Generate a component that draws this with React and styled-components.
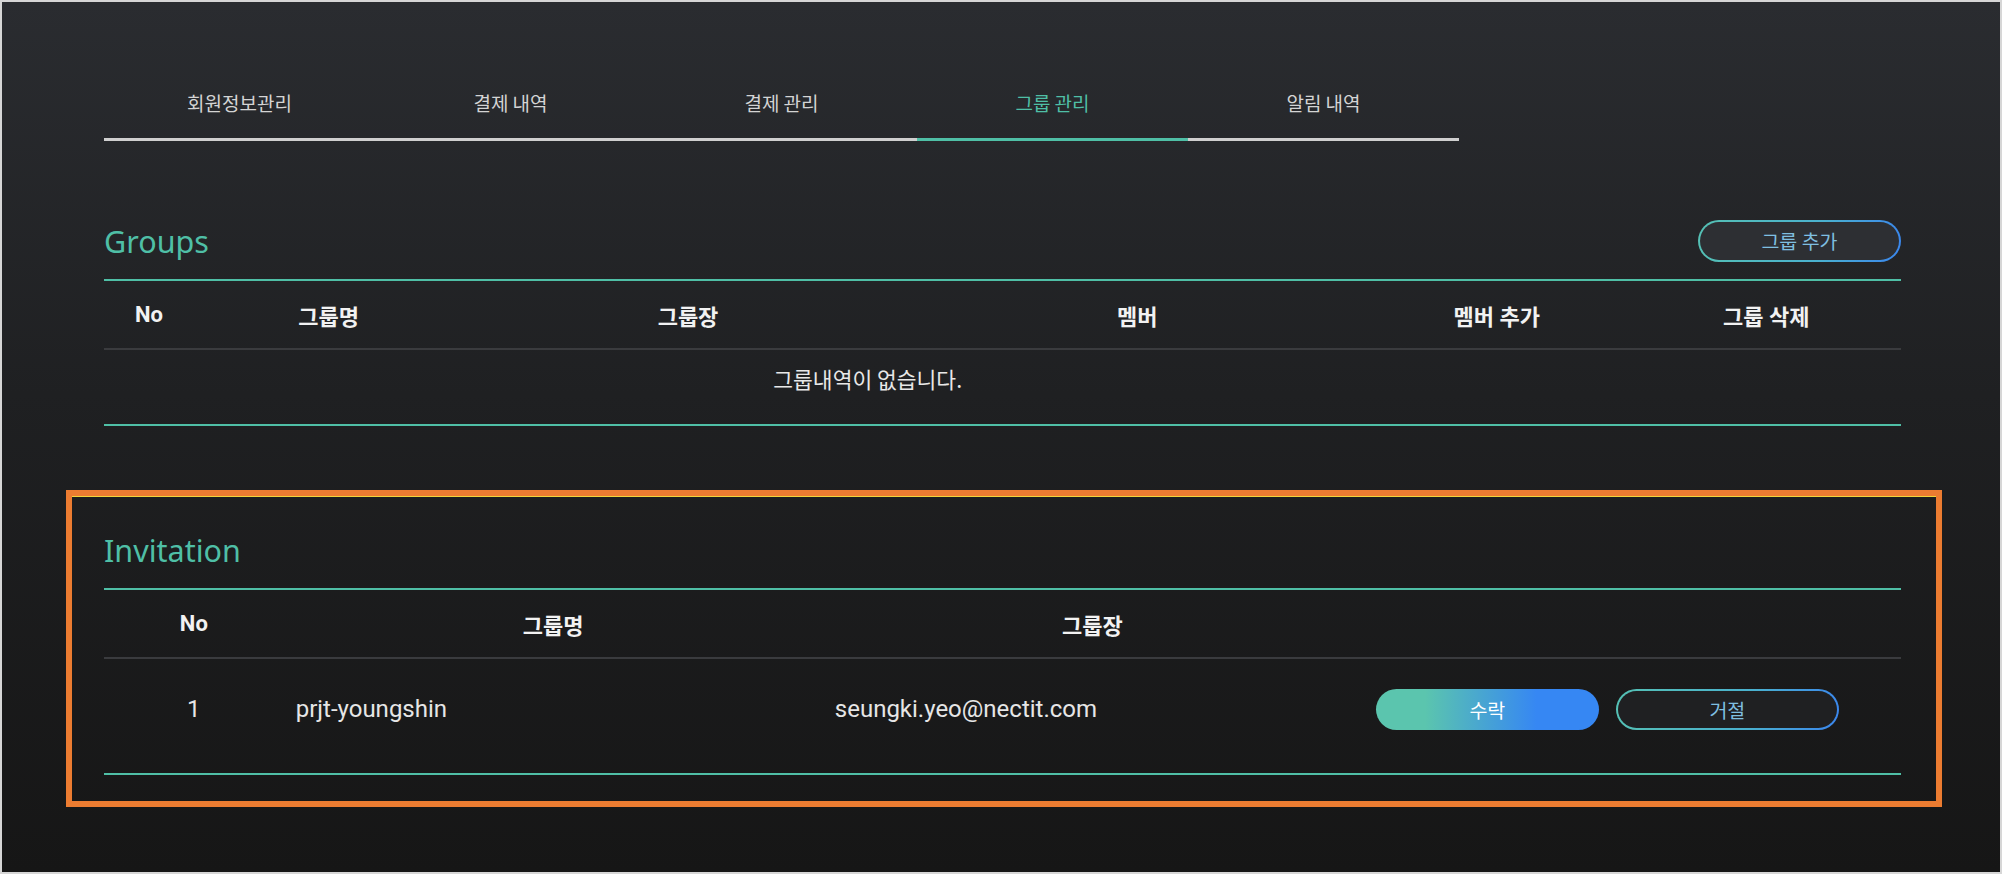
import { createGlobalStyle, styled } from 'styled-components';

const TEAL = '#4fbfa6';

const tabs = ['회원정보관리', '결제 내역', '결제 관리', '그룹 관리', '알림 내역'];
const activeTab = 3;

const groupColumns = [
  { label: 'No', width: '5%' },
  { label: '그룹명', width: '15%' },
  { label: '그룹장', width: '25%' },
  { label: '멤버', width: '25%' },
  { label: '멤버 추가', width: '15%' },
  { label: '그룹 삭제', width: '15%' },
];

const inviteColumns = [
  { label: 'No', width: '10%' },
  { label: '그룹명', width: '30%' },
  { label: '그룹장', width: '30%' },
  { label: '', width: '30%' },
];

const invitations = [
  { no: 1, name: 'prjt-youngshin', owner: 'seungki.yeo@nectit.com' },
];

const GlobalStyle = createGlobalStyle`
  * { box-sizing: border-box; }
  body {
    margin: 0;
    background: #161616;
    font-family: Roboto, "Noto Sans CJK KR", sans-serif;
  }
`;

function Groups() {
  return (
    <Section>
      <SectionHead>
        <Title>Groups</Title>
        <OutlineButton wide>그룹 추가</OutlineButton>
      </SectionHead>
      <Table>
        <colgroup>
          {groupColumns.map((c, i) => <col key={i} style={{ width: c.width }} />)}
        </colgroup>
        <thead>
          <tr>
            {groupColumns.map((c, i) => <Th key={i}>{c.label}</Th>)}
          </tr>
        </thead>
        <tbody>
          <tr>
            <EmptyCell colSpan={5}>그룹내역이 없습니다.</EmptyCell>
            <EmptyCell />
          </tr>
        </tbody>
      </Table>
    </Section>
  );
}

function Invitation() {
  return (
    <Highlighted>
      <SectionHead>
        <Title>Invitation</Title>
      </SectionHead>
      <Table>
        <colgroup>
          {inviteColumns.map((c, i) => <col key={i} style={{ width: c.width }} />)}
        </colgroup>
        <thead>
          <tr>
            {inviteColumns.map((c, i) => <Th key={i}>{c.label}</Th>)}
          </tr>
        </thead>
        <tbody>
          {invitations.map((inv) => (
            <tr key={inv.no}>
              <Td center>{inv.no}</Td>
              <Td>{inv.name}</Td>
              <Td>{inv.owner}</Td>
              <Td>
                <Actions>
                  <AcceptButton>수락</AcceptButton>
                  <OutlineButton>거절</OutlineButton>
                </Actions>
              </Td>
            </tr>
          ))}
        </tbody>
      </Table>
    </Highlighted>
  );
}

export default function App() {
  return (
    <>
      <GlobalStyle />
      <Page>
        <TabBar>
          {tabs.map((t, i) => (
            <Tab key={t} active={i === activeTab}>{t}</Tab>
          ))}
        </TabBar>
        <Groups />
        <Invitation />
      </Page>
    </>
  );
}

const Page = styled.div`
  height: 874px;
  overflow: hidden;
  border: 2px solid #d6d6d6;
  background: linear-gradient(180deg, #2a2c30 0%, #1f2022 45%, #161616 100%);
  padding: 88px 99px 0 102px;
`;

const TabBar = styled.div`
  display: flex;
  width: 1355px;
`;

const Tab = styled.div`
  flex: 1;
  text-align: center;
  font-family: "Noto Sans CJK KR", sans-serif;
  font-size: 19px;
  line-height: 26px;
  padding-bottom: 22px;
  color: ${(p) => (p.active ? TEAL : '#d4d4d4')};
  border-bottom: 3px solid ${(p) => (p.active ? TEAL : '#cfcfcf')};
`;

const Section = styled.section`
  margin-top: 79px;
`;

const Highlighted = styled.section`
  position: relative;
  margin-top: 103px;

  &::after {
    content: '';
    position: absolute;
    inset: -39px -41px -32px -38px;
    border: 6px solid #ec7c31;
    box-shadow: inset 0 1px 0 #f3d53c;
    pointer-events: none;
  }
`;

const SectionHead = styled.div`
  height: 42px;
  display: flex;
  align-items: center;
  justify-content: space-between;
  margin-bottom: 17px;
`;

const Title = styled.h2`
  margin: 0;
  font-family: "Noto Sans", "Open Sans", sans-serif;
  font-weight: 400;
  font-size: 30.5px;
  line-height: 1;
  color: ${TEAL};
`;

const Table = styled.table`
  width: 100%;
  table-layout: fixed;
  border-collapse: separate;
  border-spacing: 0;
  border-top: 2px solid ${TEAL};
  border-bottom: 2px solid ${TEAL};
`;

const Th = styled.th`
  height: 69px;
  padding: 0;
  font-family: Roboto, "Noto Sans CJK KR", sans-serif;
  font-size: 22px;
  font-weight: 700;
  color: #f2f2f2;
  text-align: center;
  border-bottom: 2px solid #3a3b3e;
`;

const EmptyCell = styled.td`
  height: 74px;
  padding: 0 0 18px;
  text-align: center;
  font-family: "Noto Sans CJK KR", sans-serif;
  font-size: 21.5px;
  color: #e8e8e8;
`;

const Td = styled.td`
  padding: 30px 0 43px ${(p) => (p.center ? '0' : '12px')};
  text-align: ${(p) => (p.center ? 'center' : 'left')};
  font-size: 24px;
  color: #e6e6e6;
  vertical-align: middle;
  line-height: 41px;
`;

const Actions = styled.div`
  display: flex;
  gap: 17px;
  padding-left: 2px;
`;

const ButtonBase = styled.button`
  width: ${(p) => (p.wide ? '203px' : '223px')};
  height: ${(p) => (p.wide ? '42px' : '41px')};
  border-radius: 21px;
  font-family: "Noto Sans CJK KR", sans-serif;
  font-size: 19.5px;
  line-height: 1;
  cursor: pointer;
`;

const AcceptButton = styled(ButtonBase)`
  border: none;
  color: #ffffff;
  background: linear-gradient(90deg, #5bc5ae 22%, #3687f3 72%);
`;

const OutlineButton = styled(ButtonBase)`
  border: 2px solid transparent;
  color: #7fbfe0;
  background:
    linear-gradient(${(p) => (p.wide ? '#2d2f33' : '#1f2022')}, ${(p) => (p.wide ? '#2d2f33' : '#1f2022')}) padding-box,
    linear-gradient(100deg, #55c1b4 0%, #4ab1cf 60%, #3a86ee 100%) border-box;
`;
